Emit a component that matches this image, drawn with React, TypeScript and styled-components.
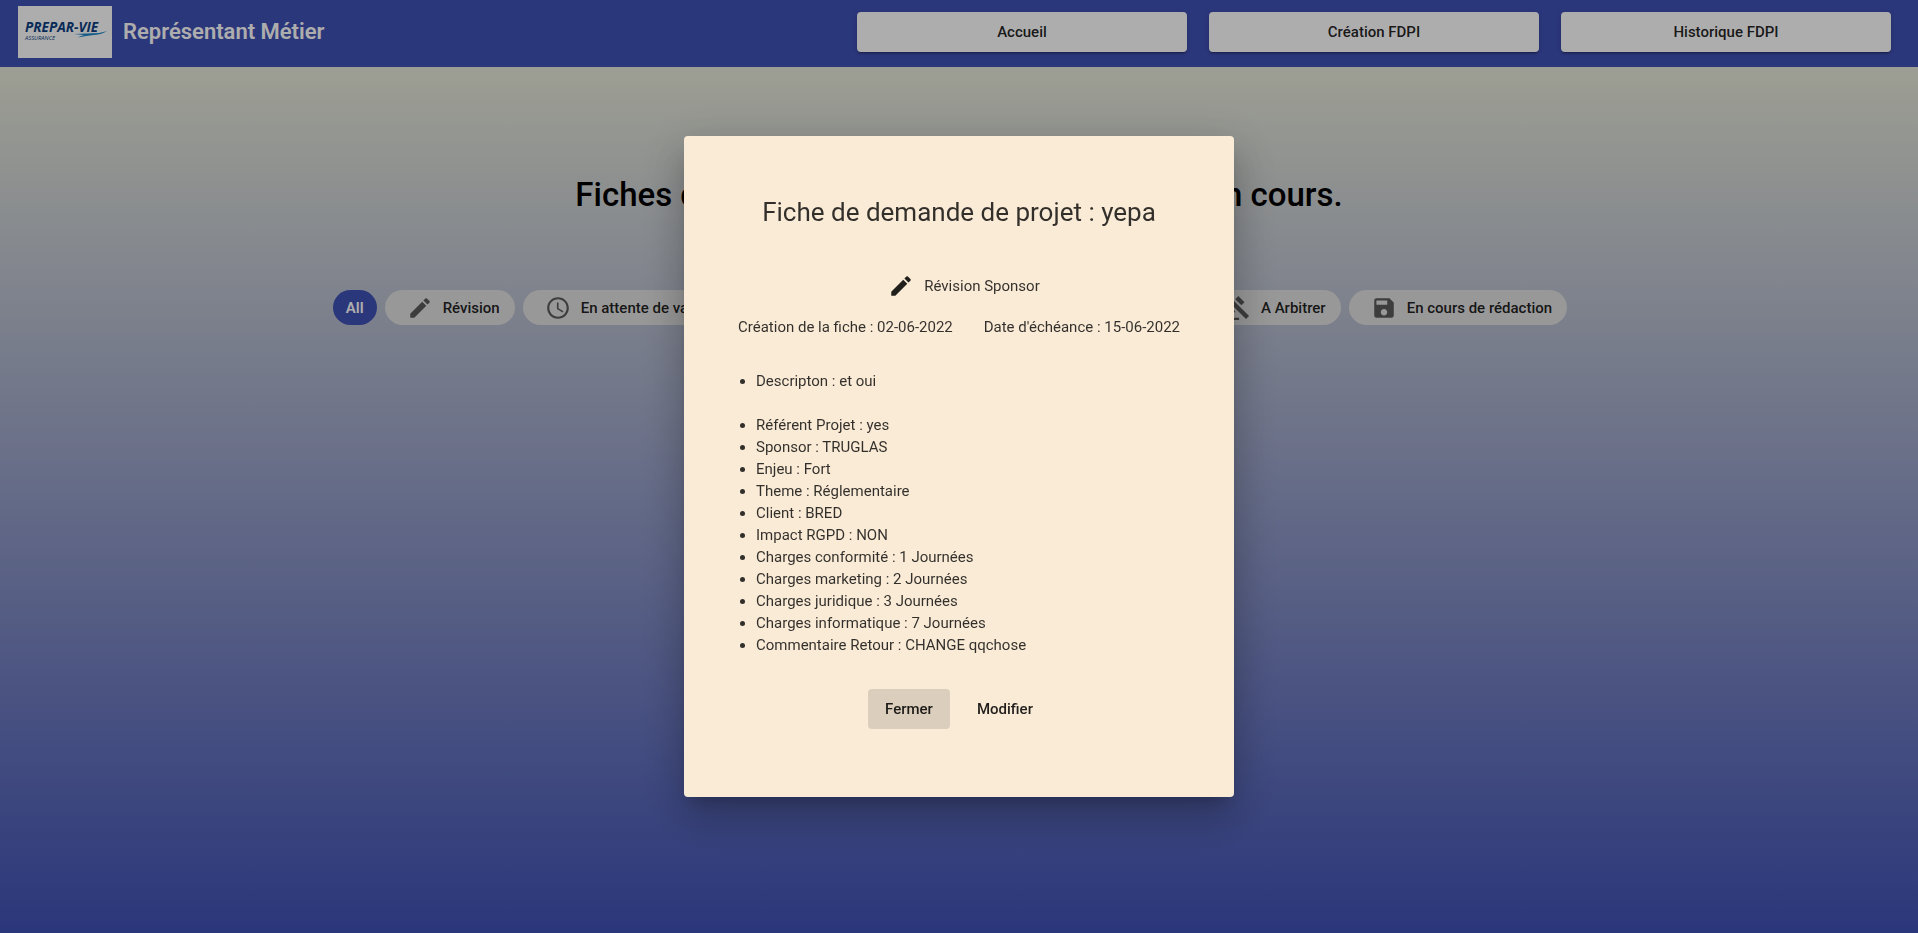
import React from "react";
import styled, { createGlobalStyle } from "styled-components";
import { MdCheckCircle, MdEdit, MdGavel, MdHourglassEmpty, MdSave, MdSchedule } from "react-icons/md";

const GlobalStyle = createGlobalStyle`
  *, *::before, *::after { box-sizing: border-box; }
  body { margin: 0; font-family: Roboto, "Helvetica Neue", sans-serif; }
`;

const Page = styled.div`
  min-height: 100vh;
  display: flex;
  flex-direction: column;
  background: linear-gradient(beige, #3f51b5);
`;

const Toolbar = styled.header`
  display: flex;
  align-items: center;
  justify-content: space-between;
  gap: 22px;
  padding: 6px 27px 9px 18px;
  background: #3f51b5;
`;

const Brand = styled.div`
  display: flex;
  align-items: center;
  gap: 11px;
  white-space: nowrap;
`;

const Logo = styled.svg`
  display: block;
  width: 94px;
  height: 52px;
  background: #fff;
`;

const BrandName = styled.h1`
  margin: 0;
  font-size: 22px;
  line-height: 32px;
  font-weight: 600;
  color: #fff;
`;

const Nav = styled.nav`
  flex: 1;
  display: flex;
  justify-content: flex-end;
  gap: 22px;
`;

const NavButton = styled.button`
  flex: 0 1 330px;
  height: 40px;
  border: 0;
  border-radius: 4px;
  background: #fff;
  color: rgba(0, 0, 0, 0.87);
  font: 500 15px/36px Roboto, sans-serif;
  box-shadow: 0 3px 1px -2px rgba(0, 0, 0, 0.2), 0 2px 2px 0 rgba(0, 0, 0, 0.14),
    0 1px 5px 0 rgba(0, 0, 0, 0.12);
`;

const Main = styled.main`
  flex: 1;
  display: flex;
  flex-direction: column;
  align-items: center;
`;

const Heading = styled.h2`
  margin: 108px 0 0;
  font-size: 33px;
  line-height: 40px;
  font-weight: 500;
  text-align: center;
  color: #000;
`;

const Chips = styled.div`
  display: flex;
  justify-content: center;
  gap: 8px;
  margin: 75px 0 0;
  padding-right: 18px;
`;

const Chip = styled.button<{ $selected?: boolean; $icon?: boolean }>`
  display: flex;
  align-items: center;
  gap: 10px;
  height: 35px;
  padding: ${(p) => (p.$icon ? "0 15px 0 22px" : "0 13px")};
  border: 0;
  border-radius: 18px;
  white-space: nowrap;
  background: ${(p) => (p.$selected ? "#3f51b5" : "#e0e0e0")};
  color: ${(p) => (p.$selected ? "#fff" : "rgba(0, 0, 0, 0.87)")};
  font: ${(p) => (p.$selected ? 600 : 500)} 15px/20px Roboto, sans-serif;

  svg { width: 26px; height: 26px; color: rgba(0, 0, 0, 0.6); }
`;

const Backdrop = styled.div`
  position: fixed;
  inset: 0;
  display: flex;
  align-items: center;
  justify-content: center;
  background: rgba(0, 0, 0, 0.32);
`;

const Dialog = styled.section`
  display: flex;
  flex-direction: column;
  align-items: center;
  width: 550px;
  padding: 56px 54px 68px;
  border-radius: 4px;
  background: antiquewhite;
  color: rgba(0, 0, 0, 0.8);
  font-size: 15px;
  line-height: 22px;
  box-shadow: 0 11px 15px -7px rgba(0, 0, 0, 0.2), 0 24px 38px 3px rgba(0, 0, 0, 0.14),
    0 9px 46px 8px rgba(0, 0, 0, 0.12);
`;

const DialogTitle = styled.h2`
  margin: 0 0 41px;
  font-size: 26px;
  line-height: 40px;
  font-weight: 400;
`;

const Status = styled.div`
  display: flex;
  align-items: center;
  gap: 10px;
  margin: 0 0 17px;
  padding-left: 10px;
  svg { width: 26px; height: 26px; color: rgba(0, 0, 0, 0.87); }
`;

const Dates = styled.div`
  align-self: stretch;
  display: flex;
  justify-content: space-between;
  white-space: nowrap;
`;

const Details = styled.ul`
  align-self: stretch;
  margin: 32px 0 0;
  padding-left: 18px;
`;

const Detail = styled.li<{ $spaced?: boolean }>`
  margin-bottom: ${(p) => (p.$spaced ? 22 : 0)}px;
`;

const Actions = styled.div`
  display: flex;
  gap: 10px;
  margin-top: 33px;
`;

const DialogButton = styled.button<{ $focused?: boolean }>`
  height: 40px;
  padding: 0 17px;
  border: 0;
  border-radius: 4px;
  background: ${(p) => (p.$focused ? "rgba(0, 0, 0, 0.12)" : "transparent")};
  color: rgba(0, 0, 0, 0.87);
  font: 500 15px/36px Roboto, sans-serif;
`;

const details = [
  "Descripton : et oui",
  "Référent Projet : yes",
  "Sponsor : TRUGLAS",
  "Enjeu : Fort",
  "Theme : Réglementaire",
  "Client : BRED",
  "Impact RGPD : NON",
  "Charges conformité : 1 Journées",
  "Charges marketing : 2 Journées",
  "Charges juridique : 3 Journées",
  "Charges informatique : 7 Journées",
  "Commentaire Retour : CHANGE qqchose",
];

export default function App() {
  return (
    <>
      <GlobalStyle />
      <Page>
        <Toolbar>
          <Brand>
            <Logo viewBox="0 0 94 52" role="img" aria-label="PREPAR-VIE Assurance">
              <text x="7" y="26" fontFamily="Open Sans, sans-serif" fontSize="13.6" fontWeight="700" fontStyle="italic" fill="#0d3f84">PREPAR-VIE</text>
              <text x="7" y="34" fontFamily="Open Sans, sans-serif" fontSize="5.8" fontWeight="500" fontStyle="italic" fill="#0d3f84">ASSURANCE</text>
              <path d="M56 28 L81 27 Q86 26 89 25 Q84 28.500 76 29 Q68 29.500 60 31.500 Q63 29.500 66 29 Z" fill="#1c86c7" />
            </Logo>
            <BrandName>Représentant Métier</BrandName>
          </Brand>
          <Nav>
            <NavButton>Accueil</NavButton>
            <NavButton>Création FDPI</NavButton>
            <NavButton>Historique FDPI</NavButton>
          </Nav>
        </Toolbar>
        <Main>
          <Heading>Fiches de demande de projet informatique en cours.</Heading>
          <Chips>
            <Chip $selected>All</Chip>
            <Chip $icon><MdEdit />Révision</Chip>
            <Chip $icon><MdSchedule />En attente de validation</Chip>
            <Chip $icon><MdHourglassEmpty />En attente de validation Sponsor</Chip>
            <Chip $icon><MdCheckCircle />Terminée</Chip>
            <Chip $icon><MdGavel />A Arbitrer</Chip>
            <Chip $icon><MdSave />En cours de rédaction</Chip>
          </Chips>
        </Main>
      </Page>
      <Backdrop>
        <Dialog role="dialog" aria-modal="true" aria-labelledby="dialog-title">
          <DialogTitle id="dialog-title">Fiche de demande de projet : yepa</DialogTitle>
          <Status><MdEdit />Révision Sponsor</Status>
          <Dates>
            <span>Création de la fiche : 02-06-2022</span>
            <span>Date d'échéance : 15-06-2022</span>
          </Dates>
          <Details>
            {details.map((text, i) => (
              <Detail key={text} $spaced={i === 0}>{text}</Detail>
            ))}
          </Details>
          <Actions>
            <DialogButton $focused>Fermer</DialogButton>
            <DialogButton>Modifier</DialogButton>
          </Actions>
        </Dialog>
      </Backdrop>
    </>
  );
}
